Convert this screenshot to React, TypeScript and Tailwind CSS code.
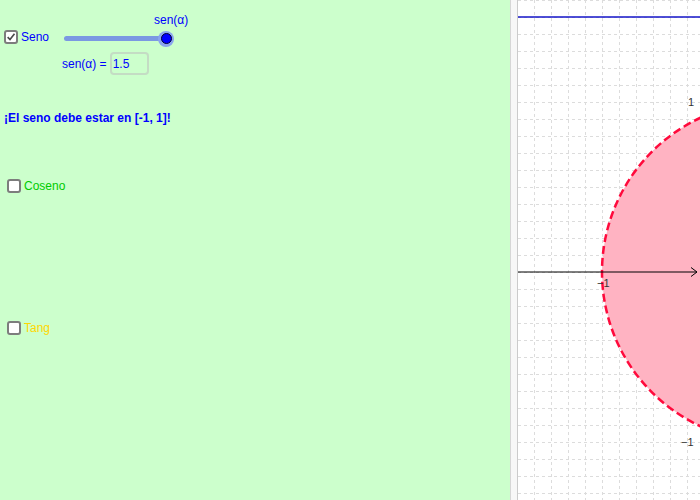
import React from "react";

function Box({ checked }: { checked?: boolean }) {
  return (
    <div className="w-[14px] h-[14px] rounded-[3px] border-2 border-[#7d7d7d] bg-white flex items-center justify-center shrink-0">
      {checked && (
        <svg width="12" height="12" viewBox="0 0 12 12">
          <path d="M2 6.2 L4.8 9 L10.2 2.2" fill="none" stroke="#4a4a4a" strokeWidth="2" />
        </svg>
      )}
    </div>
  );
}

function Graph() {
  const W = 182;
  const H = 500;
  const vx: number[] = [];
  for (let x = 16; x < W; x += 17) vx.push(x);
  const hy: number[] = [];
  for (let y = 0; y < H; y += 17) hy.push(y);
  return (
    <svg width={W} height={H} viewBox={`0 0 ${W} ${H}`} className="block">
      <rect x="0" y="0" width={W} height={H} fill="#ffffff" />
      {vx.map((x) => (
        <line key={"v" + x} x1={x + 0.5} y1={0} x2={x + 0.5} y2={H} stroke="#dcdcdc" strokeWidth="1" strokeDasharray="3 3" />
      ))}
      {hy.map((y) => (
        <line key={"h" + y} x1={0} y1={y + 0.5} x2={W} y2={y + 0.5} stroke="#dcdcdc" strokeWidth="1" strokeDasharray="3 3" />
      ))}
      <circle cx="254" cy="272" r="170" fill="#ffb3c2" stroke="#ff0a3c" strokeWidth="2.5" strokeDasharray="8 4" />
      <line x1="0" y1="17" x2={W} y2="17" stroke="#1414c8" strokeWidth="1.3" />
      <line x1="0" y1="272" x2="179" y2="272" stroke="#000000" strokeWidth="1.2" />
      <path d="M173 267.5 L179 272 L173 276.5" fill="none" stroke="#000" strokeWidth="1" />
      <text x="79" y="287" fontSize="11" fill="#333" fontFamily="Liberation Sans, Arial, sans-serif">−1</text>
      <text x="170" y="106" fontSize="11" fill="#333" fontFamily="Liberation Sans, Arial, sans-serif">1</text>
      <text x="163" y="446" fontSize="11" fill="#333" fontFamily="Liberation Sans, Arial, sans-serif">−1</text>
    </svg>
  );
}

export default function App() {
  return (
    <div className="flex w-[700px] h-[500px] overflow-hidden font-['Liberation_Sans',Arial,sans-serif] text-[12px]">
      <div className="w-[510px] h-[500px] bg-[#ccffcc] flex flex-col shrink-0">
        <div className="pt-[14px] pl-[154px] leading-[13px] h-[27px] text-[#0000ff]">sen(α)</div>
        <div className="mt-[2px] flex items-center h-[16px]">
          <div className="ml-[4px]">
            <Box checked />
          </div>
          <span className="ml-[3px] text-[#0000ff] leading-[14px]">Seno</span>
          <div className="ml-[15px] flex items-center mt-[3px]">
            <div className="w-[97px] h-[5px] rounded-full bg-[#7b98e2]" />
            <div className="-ml-[3px] w-[16px] h-[16px] rounded-full bg-[#8aa4ee] flex items-center justify-center">
              <div className="w-[11px] h-[11px] rounded-full bg-[#0000ff] border border-[#000033]" />
            </div>
          </div>
        </div>
        <div className="mt-[7px] pl-[62px] flex items-center h-[23px]">
          <span className="text-[#0000ff] leading-[14px]">sen(α) =</span>
          <div className="ml-[3px] w-[39px] h-[23px] rounded-[4px] border-2 border-[#c4dcc4] flex items-center pl-[1px] text-[#0000ff]">
            1.5
          </div>
        </div>
        <div className="mt-[36px] pl-[4px] font-bold text-[#0000ff] leading-[14px]">¡El seno debe estar en [-1, 1]!</div>
        <div className="mt-[54px] pl-[7px] flex items-center h-[14px]">
          <Box />
          <span className="ml-[3px] text-[#00cc00] leading-[14px]">Coseno</span>
        </div>
        <div className="mt-[128px] pl-[7px] flex items-center h-[14px]">
          <Box />
          <span className="ml-[3px] text-[#ffd700] leading-[14px]">Tang</span>
        </div>
      </div>
      <div className="w-[1px] h-[500px] bg-[#d6d6d6] shrink-0" />
      <div className="w-[6px] h-[500px] bg-[#f7f7f7] shrink-0" />
      <div className="w-[1px] h-[500px] bg-[#cbcbcb] shrink-0" />
      <Graph />
    </div>
  );
}
